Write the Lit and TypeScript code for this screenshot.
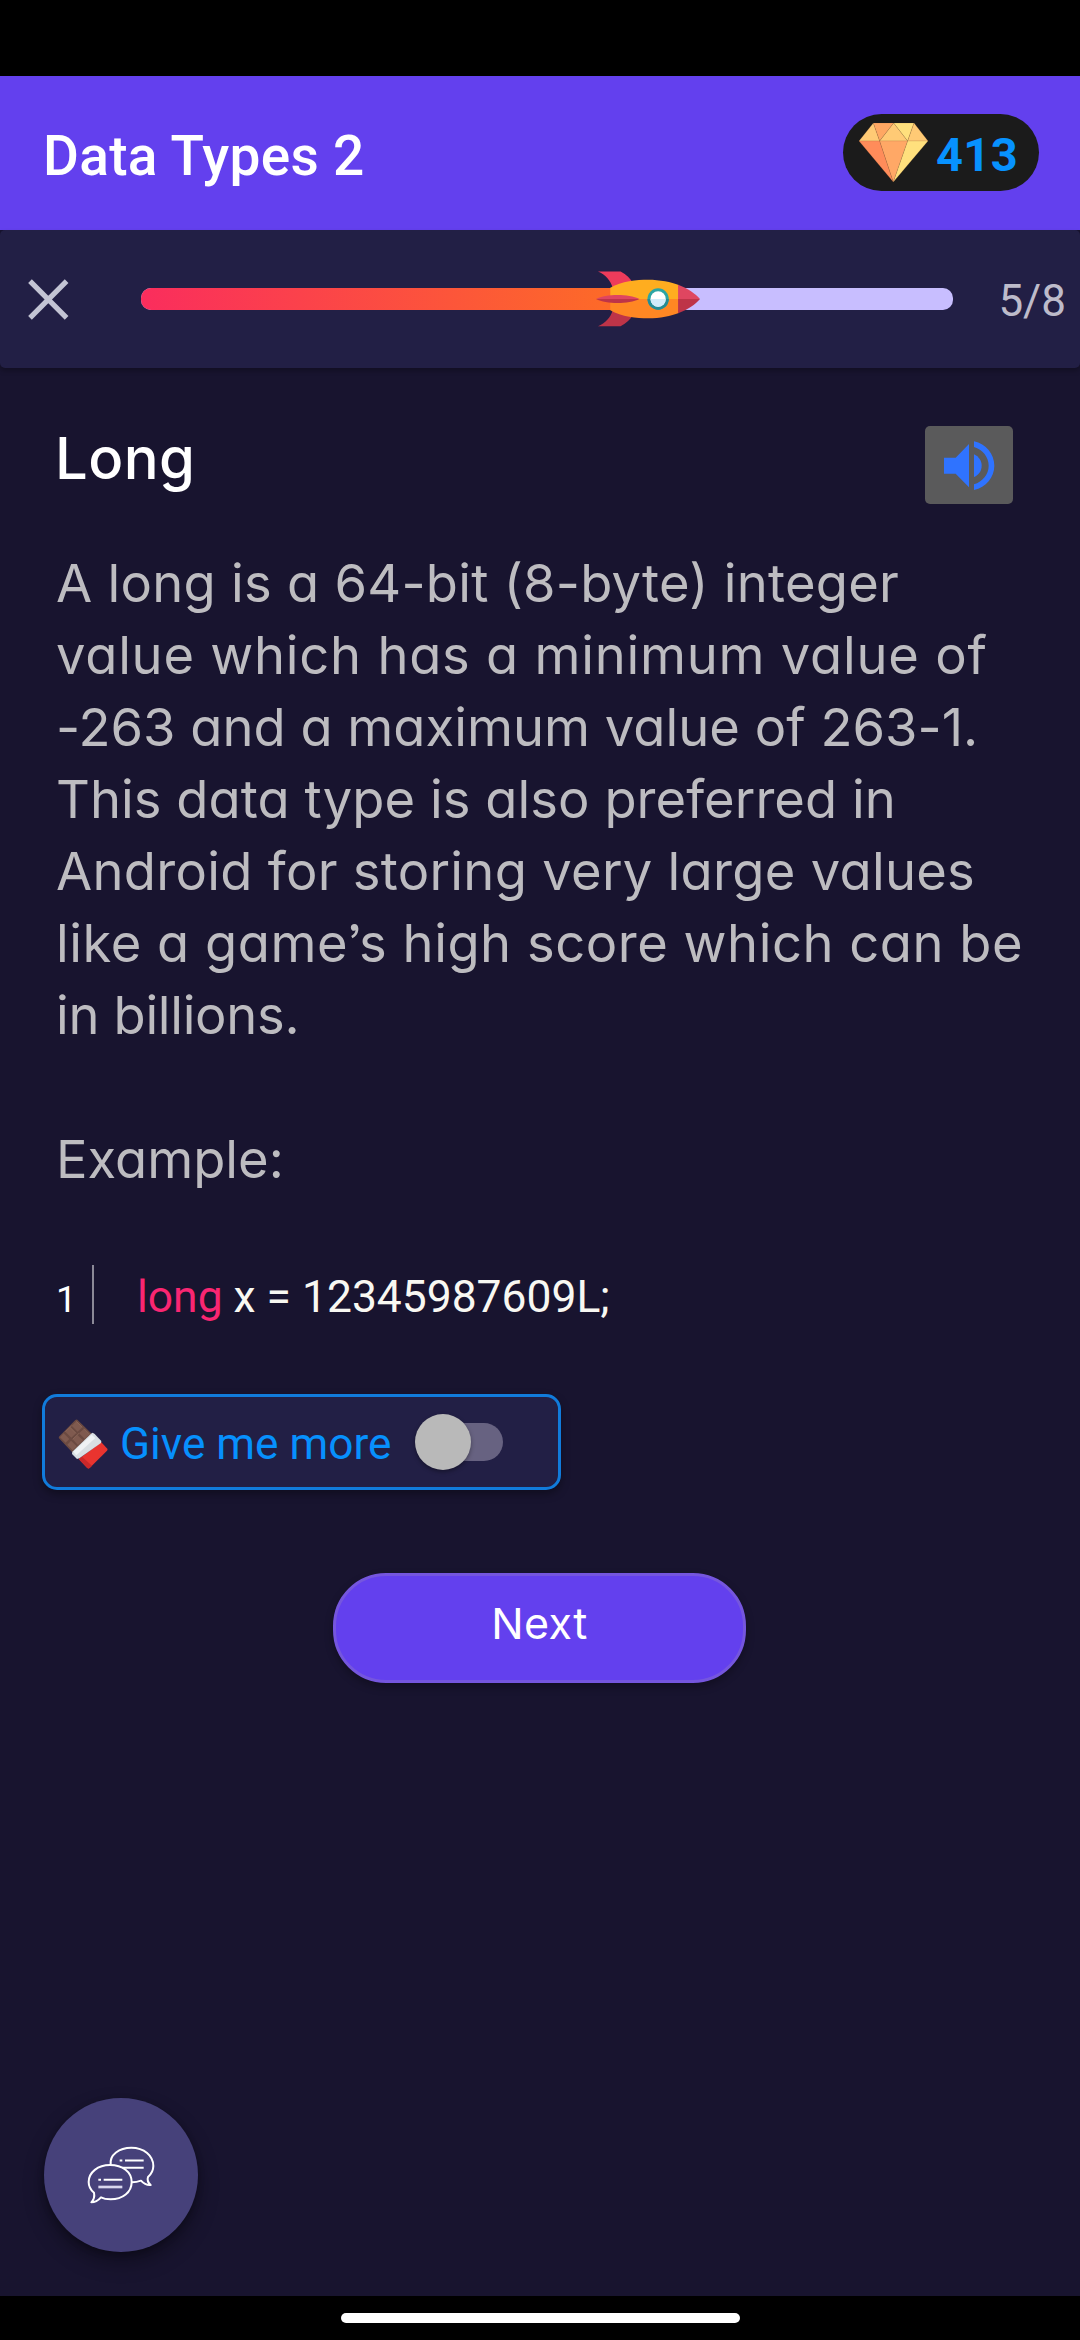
import { LitElement, html, css } from "lit";
import { customElement, property } from "lit/decorators.js";
import { styleMap } from "lit/directives/style-map.js";

interface Line {
  text: string;
  tracking: number;
}

const LESSON: Line[] = [
  { text: "A long is a 64-bit (8-byte) integer", tracking: 0.26 },
  { text: "value which has a minimum value of", tracking: 0.76 },
  { text: "-263 and a maximum value of 263-1.", tracking: 0.02 },
  { text: "This data type is also preferred in", tracking: 0.05 },
  { text: "Android for storing very large values", tracking: 0.29 },
  { text: "like a game’s high score which can be", tracking: 0.53 },
  { text: "in billions.", tracking: -0.3 },
  { text: "", tracking: 0 },
  { text: "Example:", tracking: 0 },
];

@customElement("lesson-header")
export class LessonHeader extends LitElement {
  @property() heading = "";
  @property() gems = "";

  static styles = css`
    :host {
      display: flex;
      justify-content: space-between;
      align-items: flex-start;
      box-sizing: border-box;
      height: 154px;
      padding: 38px 41px 0 43px;
      background: #6340ee;
      color: #fff;
      font-family: Roboto, sans-serif;
    }
    .title {
      margin: 0;
      padding-top: 10px;
      font-size: 55px;
      font-weight: 500;
      line-height: 64px;
      letter-spacing: 0.3px;
      white-space: nowrap;
    }
    .gems {
      display: flex;
      align-items: flex-start;
      box-sizing: border-box;
      width: 196px;
      height: 77px;
      padding: 9px 0 0 16px;
      border-radius: 39px;
      background: #1b1b1b;
    }
    .gem {
      width: 69px;
      height: 59px;
      margin-right: 8px;
    }
    .count {
      color: #0792ff;
      font-size: 47px;
      font-weight: 700;
      line-height: 63px;
      letter-spacing: 0.4px;
    }
  `;

  render() {
    return html`
      <h1 class="title">${this.heading}</h1>
      <div class="gems">
        <svg class="gem" viewBox="117 189 207 177" stroke="#8a5a30" stroke-opacity="0.3" stroke-width="1.5" stroke-linejoin="bevel">
          <path d="M160 189 117 243H179Z" fill="#ffca75" />
          <path d="M160 189H221L179 243Z" fill="#ffa763" />
          <path d="M221 189 179 243H263Z" fill="#ffca75" />
          <path d="M221 189H282L263 243Z" fill="#ffe07d" />
          <path d="M282 189 263 243H324Z" fill="#ffca75" />
          <path d="M117 243H179L220 366Z" fill="#ff8c5a" />
          <path d="M179 243H263L220 366Z" fill="#ffa866" />
          <path d="M263 243H324L220 366Z" fill="#ffe07d" />
        </svg>
        <span class="count">${this.gems}</span>
      </div>
    `;
  }
}

@customElement("lesson-progress")
export class LessonProgress extends LitElement {
  @property({ type: Number }) current = 0;
  @property({ type: Number }) total = 1;

  static styles = css`
    :host {
      display: flex;
      align-items: center;
      box-sizing: border-box;
      height: 138px;
      padding: 0 14px 0 28px;
      border-radius: 5px;
      background: #221f45;
      box-shadow: 0 3px 5px rgba(0, 0, 0, 0.25);
      font-family: Roboto, sans-serif;
    }
    .close {
      flex: none;
      width: 41px;
      height: 41px;
    }
    .track {
      position: relative;
      flex: none;
      width: 812px;
      height: 22px;
      margin-left: 72px;
      border-radius: 10px;
      background: #c8beff;
    }
    .fill {
      height: 22px;
      border-radius: 10px 0 0 10px;
      background: linear-gradient(90deg, #fa2d5d, #fd6a28 92%);
    }
    .rocket {
      position: absolute;
      top: -17px;
      left: 455px;
      width: 104px;
      height: 56px;
    }
    .step {
      margin-left: auto;
      padding-top: 3px;
      color: #bdbbca;
      font-size: 44px;
      line-height: 52px;
    }
  `;

  render() {
    const width = styleMap({ width: `${(this.current / this.total) * 100}%` });
    return html`
      <svg class="close" viewBox="0 0 41 41" stroke="#c3c4d4" stroke-width="5.2">
        <path d="M2 2.2 38.6 38.8M38.6 2.2 2 38.8" />
      </svg>
      <div class="track">
        <div class="fill" style=${width}></div>
        <svg class="rocket" viewBox="48 62 313 168">
          <path d="M54 63H122C140 72 152 84 158 97L98 112C92 90 76 72 54 63Z" fill="#ed3b5b" />
          <path d="M54 228H122C140 219 152 207 158 195L98 180C92 202 76 219 54 228Z" fill="#be3448" />
          <path d="M91 146V112C125 92 170 88 205 88C240 88 275 95 297 104V146Z" fill="#ffad1f" />
          <path d="M91 146V180C125 200 170 204 205 204C240 204 275 197 297 188V146Z" fill="#ff8723" />
          <path d="M295 103C325 114 347 130 361 146H295Z" fill="#df4660" />
          <path d="M295 189C325 178 347 162 361 146H295Z" fill="#be3448" />
          <path d="M48 146C80 130 145 130 179 146Z" fill="#df4660" />
          <path d="M48 146C80 162 145 162 179 146Z" fill="#be3448" />
          <circle cx="235" cy="146" r="32" fill="#2ba5a5" />
          <path d="M203 146A32 32 0 0 0 267 146Z" fill="#238b95" />
          <circle cx="235" cy="146" r="23" fill="#fff" />
          <path d="M212 146A23 23 0 0 0 258 146Z" fill="#d0ebfa" />
        </svg>
      </div>
      <span class="step">${this.current}/${this.total}</span>
    `;
  }
}

@customElement("app-root")
export class AppRoot extends LitElement {
  static styles = css`
    :host {
      display: flex;
      flex-direction: column;
      box-sizing: border-box;
      width: 1080px;
      height: 2340px;
      padding-top: 76px;
      overflow: hidden;
      background: #000;
      font-family: Inter, "Open Sans", sans-serif;
    }
    .screen {
      display: flex;
      flex-direction: column;
      flex: none;
      height: 2220px;
      background: #18142f;
    }
    .content {
      display: flex;
      flex-direction: column;
      flex: 1;
      padding: 48px 0 44px 42px;
    }
    .heading {
      display: flex;
      justify-content: space-between;
      align-items: flex-start;
      height: 88px;
      padding: 0 67px 0 13px;
    }
    .name {
      margin: 0;
      color: #fff;
      font-size: 58px;
      font-weight: 500;
      line-height: 85px;
      letter-spacing: 0.4px;
    }
    .listen {
      display: flex;
      justify-content: center;
      align-items: center;
      width: 88px;
      height: 78px;
      margin-top: 10px;
      padding: 0;
      border: 0;
      border-radius: 5px;
      background: #5a5a5b;
    }
    .speaker {
      width: 51px;
      height: 49px;
    }
    .text {
      margin: 43px 0 0 14px;
      color: #bdbcc0;
      font-size: 52.5px;
      line-height: 72px;
      font-feature-settings: "cv11", "ss03";
    }
    .line {
      display: block;
      height: 72px;
      white-space: nowrap;
    }
    .code {
      display: flex;
      height: 59px;
      margin: 70px 0 0 14px;
      font-family: Roboto, sans-serif;
      white-space: pre;
    }
    .number {
      box-sizing: border-box;
      width: 36px;
      color: #fff;
      font-size: 36.5px;
      line-height: 69px;
    }
    .source {
      padding-left: 43px;
      border-left: 2px solid #8b8997;
      color: #f8f8f2;
      font-size: 44.4px;
      line-height: 64px;
    }
    .keyword {
      color: #f92672;
    }
    .more {
      display: flex;
      align-items: center;
      box-sizing: border-box;
      width: 519px;
      height: 96px;
      margin-top: 70px;
      padding-left: 13px;
      border: 3px solid #117bdb;
      border-radius: 15px;
      background: #221f45;
      box-shadow: 0 4px 8px rgba(0, 0, 0, 0.35);
      font-family: Roboto, sans-serif;
    }
    .bar {
      width: 50px;
      height: 50px;
      margin-top: 4px;
    }
    .label {
      padding: 3px 0 0 12px;
      color: #0790fd;
      font-size: 44.2px;
      line-height: 56px;
      white-space: nowrap;
    }
    .switch {
      display: flex;
      align-items: center;
      width: 81px;
      height: 38px;
      margin-left: 31px;
      border-radius: 19px;
      background: #676281;
    }
    .thumb {
      flex: none;
      width: 56px;
      height: 56px;
      margin-left: -7px;
      border-radius: 50%;
      background: #b9b9b9;
      box-shadow: 0 2px 4px rgba(0, 0, 0, 0.35);
    }
    .next {
      box-sizing: border-box;
      width: 413px;
      height: 110px;
      margin: 83px 0 0 291px;
      padding: 0 0 9px;
      border: 3px solid #7556de;
      border-radius: 53px;
      background: #6340ee;
      box-shadow: 0 4px 8px rgba(0, 0, 0, 0.3);
      color: #fff;
      font: 400 43px/95px Inter, sans-serif;
      letter-spacing: 0.4px;
    }
    .chat {
      display: flex;
      width: 154px;
      height: 154px;
      margin: auto 0 0 2px;
      padding: 0;
      border: 0;
      border-radius: 50%;
      background: #46417a;
      box-shadow: 0 10px 20px rgba(0, 0, 0, 0.35), 0 2px 6px rgba(0, 0, 0, 0.25);
    }
    .bubbles {
      width: 154px;
      height: 154px;
    }
    .home {
      width: 399px;
      height: 10px;
      margin: 17px auto 0;
      border-radius: 5px;
      background: #fff;
    }
  `;

  render() {
    return html`
      <main class="screen">
        <lesson-header heading="Data Types 2" gems="413"></lesson-header>
        <lesson-progress current="5" total="8"></lesson-progress>
        <section class="content">
          <div class="heading">
            <h2 class="name">Long</h2>
            <button class="listen">
              <svg class="speaker" viewBox="1152 121 153 147" fill="#2f73ff">
                <path d="M1152 171H1187L1227 130V260L1187 219H1152Z" />
                <path d="M1242 161C1257 168 1265 181 1265 195C1265 210 1257 222 1242 229Z" />
                <path d="M1242 122C1278 130 1303 160 1303 195C1303 230 1278 260 1242 268V251C1268 243 1286 221 1286 195C1286 169 1268 147 1242 139Z" />
              </svg>
            </button>
          </div>
          <div class="text">
            ${LESSON.map(
              (line) => html`<span class="line" style=${styleMap({ letterSpacing: `${line.tracking}px` })}>${line.text}</span>`
            )}
          </div>
          <div class="code"><span class="number">1</span><span class="source"><span class="keyword">long</span> x = 12345987609L;</span></div>
          <div class="more">
            <svg class="bar" viewBox="54 118 150 150">
              <path d="M112 120 156 163 98 219 57 176Q55 173 58 170L106 121Q109 118 112 120Z" fill="#6b4a41" />
              <g fill="#7f5a4f">
                <path d="M109 125 127 143 113 156 95 138Z" />
                <path d="M90 143 108 161 94 174 76 156Z" />
                <path d="M132 147 149 164 134 177 117 161Z" />
                <path d="M112 166 129 182 114 196 98 179Z" />
                <path d="M71 161 88 178 77 189 60 173Z" />
                <path d="M93 183 110 200 98 212 82 195Z" />
              </g>
              <path d="M109 125 127 143M90 143 108 161M132 147 149 164M95 138 76 156M117 161 98 179" stroke="#94705f" stroke-width="2" fill="none" />
              <path d="M184 188 202 207Q204 210 201 213L149 265Q145 268 141 264L116 238Z" fill="#e9342f" />
              <path d="M116 238 141 264Q145 268 149 265L156 258 126 231Z" fill="#c9282a" />
              <path d="M153 162 158 159 164 163 184 184 183 190 118 236 111 238 96 223 97 216Z" fill="#d9dfe3" />
              <path d="M100 216 155 165 166 175 109 227Z" fill="#eff2f4" />
            </svg>
            <span class="label">Give me more</span>
            <div class="switch"><div class="thumb"></div></div>
          </div>
          <button class="next">Next</button>
          <button class="chat">
            <svg class="bubbles" viewBox="72 84 462 462" fill="none" stroke="#fff" stroke-width="6" stroke-linejoin="round">
              <path d="M272 284C268 254 298 233 334 233C372 233 400 257 400 288C400 301 394 312 384 321C381 330 384 338 392 345C381 346 371 341 363 332C355 335 347 337 336 337" />
              <path d="M270 285C308 285 335 306 335 336C335 367 308 388 272 388C261 388 252 387 243 382C235 391 226 397 214 397C222 389 224 378 222 368C211 359 206 349 206 336C206 307 234 285 270 285Z" />
              <path d="M299 271.500H307M315 271.500H371M308 293H371M235 329H243M251 329H307" />
              <path d="M235 351H307" stroke="#d9d7ee" stroke-width="8" />
            </svg>
          </button>
        </section>
      </main>
      <div class="home"></div>
    `;
  }
}
